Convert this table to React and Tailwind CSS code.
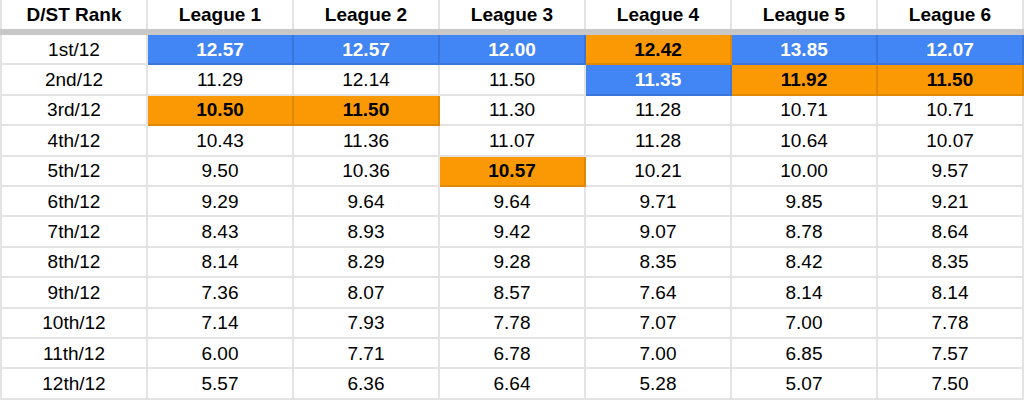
import React from 'react';

const leagues = ['League 1', 'League 2', 'League 3', 'League 4', 'League 5', 'League 6'];

// b = blue highlight, o = orange highlight
const rows = [
  ['1st/12', ['12.57', 'b'], ['12.57', 'b'], ['12.00', 'b'], ['12.42', 'o'], ['13.85', 'b'], ['12.07', 'b']],
  ['2nd/12', '11.29', '12.14', '11.50', ['11.35', 'b'], ['11.92', 'o'], ['11.50', 'o']],
  ['3rd/12', ['10.50', 'o'], ['11.50', 'o'], '11.30', '11.28', '10.71', '10.71'],
  ['4th/12', '10.43', '11.36', '11.07', '11.28', '10.64', '10.07'],
  ['5th/12', '9.50', '10.36', ['10.57', 'o'], '10.21', '10.00', '9.57'],
  ['6th/12', '9.29', '9.64', '9.64', '9.71', '9.85', '9.21'],
  ['7th/12', '8.43', '8.93', '9.42', '9.07', '8.78', '8.64'],
  ['8th/12', '8.14', '8.29', '9.28', '8.35', '8.42', '8.35'],
  ['9th/12', '7.36', '8.07', '8.57', '7.64', '8.14', '8.14'],
  ['10th/12', '7.14', '7.93', '7.78', '7.07', '7.00', '7.78'],
  ['11th/12', '6.00', '7.71', '6.78', '7.00', '6.85', '7.57'],
  ['12th/12', '5.57', '6.36', '6.64', '5.28', '5.07', '7.50'],
];

function Cell({ value, first }) {
  const [text, mark] = Array.isArray(value) ? value : [value, null];
  let tone = 'bg-white text-black';
  if (mark === 'b') tone = 'bg-[#4285f4] text-white font-bold';
  if (mark === 'o') tone = 'bg-[#fb9904] text-black font-bold';
  return (
    <div
      className={`${first ? 'w-[148px] border-l-2' : 'w-[146px]'} h-full flex items-center justify-center border-r-2 border-b-2 border-black/[11%] ${tone}`}
    >
      {text}
    </div>
  );
}

export default function App() {
  return (
    <div className="w-[1024px] h-[401px] bg-white overflow-hidden font-['Liberation_Sans',Arial,sans-serif] text-[19px] leading-none text-black">
      <div className="flex h-[29px]">
        <div className="w-[148px] h-full flex items-center justify-center font-bold border-l-2 border-r-2 border-black/[11%]">
          D/ST Rank
        </div>
        {leagues.map((l) => (
          <div key={l} className="w-[146px] h-full flex items-center justify-center font-bold border-r-2 border-black/[11%]">
            {l}
          </div>
        ))}
      </div>
      <div className="h-[6px] bg-[#c8c8c8]" />
      {rows.map((r) => (
        <div key={r[0]} className="flex h-[30.4px]">
          {r.map((v, i) => (
            <Cell key={i} value={v} first={i === 0} />
          ))}
        </div>
      ))}
    </div>
  );
}
